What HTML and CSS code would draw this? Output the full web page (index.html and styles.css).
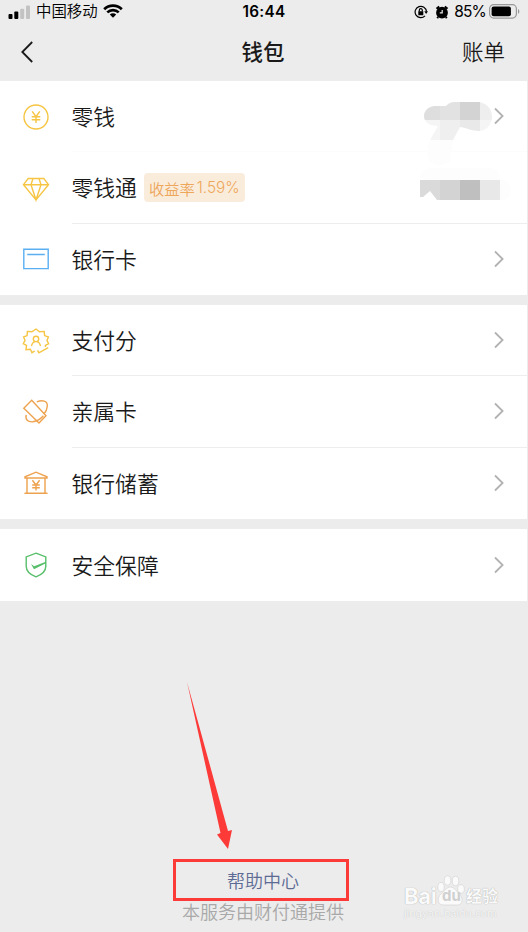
FILE: index.html
```html
<!DOCTYPE html>
<html lang="zh-CN">
<head>
  <meta charset="UTF-8" />
  <meta name="viewport" content="width=device-width, initial-scale=1.0"/>
  <title>钱包</title>
  <link rel="stylesheet" href="styles.css">
</head>
<body>
  <header>
    <div class="status">
      <div class="status-left">
        <svg class="signal" width="23" height="14" viewBox="0 0 23 14">
          <rect x="0.5" y="9" width="4" height="5" rx="1"/>
          <rect x="6.3" y="6.6" width="4" height="7.4" rx="1"/>
          <rect class="off" x="12.2" y="3.7" width="4" height="10.3" rx="1"/>
          <rect class="off" x="18" y="0.5" width="4" height="13.5" rx="1"/>
        </svg>
        <span class="carrier">中国移动</span>
        <svg class="wifi" width="20" height="14" viewBox="0 0 20 14">
          <path d="M1.2 5.3a12.4 12.4 0 0 1 17.6 0M4.3 8.4a8.1 8.1 0 0 1 11.4 0"/>
          <path class="dot" d="M10 13.8l-3.2-3.3a4.6 4.6 0 0 1 6.4 0z"/>
        </svg>
      </div>
      <span class="time">16:44</span>
      <div class="status-right">
        <svg class="lock" width="14" height="14" viewBox="0 0 14 14">
          <path d="M11 10.9A5.7 5.7 0 1 1 12.5 6.5"/>
          <path class="fill" d="M10.3 6.2h3.7l-1.9 2.7zM4.3 6.3h5v3.9h-5z"/>
          <path class="shackle" d="M5.3 6.5V5.2a1.5 1.5 0 0 1 3 0v1.3"/>
        </svg>
        <svg class="alarm" width="14" height="14" viewBox="0 0 14 14">
          <circle cx="7" cy="7.7" r="5.9"/>
          <path class="ears" d="M1.5 3.8l2.7-2.4M12.5 3.8L9.8 1.4M3.2 12l-1 1.2M10.8 12l1 1.2"/>
          <path class="hands" d="M7.2 4.9v3H4.8"/>
        </svg>
        <span class="percent">85%</span>
        <svg class="battery" width="31" height="15" viewBox="0 0 31 15">
          <rect class="shell" x="0.6" y="0.7" width="26.8" height="13.4" rx="4"/>
          <rect x="2.6" y="2.6" width="19.3" height="9.6" rx="2"/>
          <path class="cap" d="M29 5c1.8.7 1.8 4.1 0 4.8z"/>
        </svg>
      </div>
    </div>
    <nav>
      <svg class="back" width="12" height="22" viewBox="0 0 12 22"><path d="M11.2 1L1.3 11l9.9 10"/></svg>
      <h1>钱包</h1>
      <a class="bill">账单</a>
    </nav>
  </header>

  <section class="group">
    <div class="row">
      <svg class="icon yellow" viewBox="0 0 28 28">
        <circle cx="14" cy="14" r="12"/>
        <path d="M10.2 8.3l3.8 5.4 3.8-5.4M14 13.7v6.2M9.7 13.7h8.6M9.700 16.700h8.600"/>
      </svg>
      <div class="body faint">
        <span class="label">零钱</span>
        <svg class="chevron" viewBox="0 0 10 18"><path d="M1 1.5L8.6 9 1 16.5"/></svg>
      </div>
    </div>
    <div class="row">
      <svg class="icon yellow" viewBox="0 0 28 28">
        <path d="M6.2 4.5h15.6l4.7 6.2L14 26 1.5 10.7zM1.5 10.7h25M11 4.5l-2 6.2L14 26l5-15.3-2-6.2"/>
      </svg>
      <div class="body">
        <span class="label">零钱通</span>
        <span class="tag">收益率<b>1.59%</b></span>
      </div>
    </div>
    <div class="row">
      <svg class="icon blue" viewBox="0 0 28 28">
        <path d="M1.8 4.3h24.4v19.3H1.8zM5.2 9.5h17.6"/>
      </svg>
      <div class="body">
        <span class="label">银行卡</span>
        <svg class="chevron" viewBox="0 0 10 18"><path d="M1 1.5L8.6 9 1 16.5"/></svg>
      </div>
    </div>
    <!-- mosaic over the balances -->
    <svg class="mosaic" width="96" height="105" viewBox="0 0 96 105">
      <clipPath id="blob"><path d="M4 16c0-5 4-9 10-10h12c3-3 5-4 8-4h26c7 2 12 7 12 15s-6 14-13 14c-8 0-11-3-19-4L33 40 30 60c-4 7-19 7-22-2-2-6 0-12 2-18l8-14C9 26 4 22 4 16z"/></clipPath>
      <g clip-path="url(#blob)">
        <path fill="#dedede" d="M0 0h20v20H0z"/>
        <path fill="#e2e2e2" d="M20 0h20v20H20z"/>
        <path fill="#d3d3d3" d="M40 0h20v20H40z"/>
        <path fill="#eeeeee" d="M60 0h20v20H60z"/>
        <path fill="#f5f5f5" d="M0 20h20v20H0zM60 20h20v20H60z"/>
        <path fill="#efefef" d="M20 20h20v20H20z"/>
        <path fill="#e9e9e9" d="M40 20h20v20H40z"/>
        <path fill="#fdfdfd" d="M0 40h80v40H0z"/>
      </g>
      <path fill="#fdfdfd" d="M0 78c0-6 6-10 12-10h58c6 0 10 4 10 10v2h4c9 3 9 18 0 20h-4z"/>
      <path fill="#dadada" d="M0 80h20v20h-3l-7-9-7 6H0z"/>
      <path fill="#d3d3d3" d="M20 80h20v20H20z"/>
      <path fill="#bfbfbf" d="M40 80h20v20H40z"/>
      <path fill="#e8e8e8" d="M60 80h20v20H60z"/>
    </svg>
  </section>

  <section class="group">
    <div class="row">
      <svg class="icon yellow" viewBox="0 0 28 28">
        <path d="M12.8 24L10 25.7l-1.600-3.400-4.400.5.500-4.300-3.200-1.800L3 13.500 1.600 10l3.500-1.400.3-4.200 4.500.4L14 2l3.500 2.800 4.700-.4.400 4.200L26.400 10 25 13.500l1.600 3.200-3.200 1.800.1 1.500M15.600 23.400l1.300 2.500 9.300-5.200"/>
        <circle cx="14" cy="11.9" r="2.700"/>
        <path d="M9.500 19.200c.4-2.600 1.700-4.200 3.500-4.600M18.500 19.200c-.4-2.600-1.700-4.200-3.500-4.600"/>
      </svg>
      <div class="body">
        <span class="label">支付分</span>
        <svg class="chevron" viewBox="0 0 10 18"><path d="M1 1.5L8.6 9 1 16.5"/></svg>
      </div>
    </div>
    <div class="row">
      <svg class="icon orange" viewBox="0 0 28 28">
        <path d="M9.700 2.200L24 17.800l-7 7.300L1.800 10.200z"/>
        <path d="M14.800 3.900c5-2 11-1.600 10.500 4.400-.2 3.400-1.500 5.600-3.400 7.700M4.100 16.800c-.9 5.700 2.200 7.400 6.800 7 4.500-.6 7.500-2.500 10.500-6"/>
      </svg>
      <div class="body">
        <span class="label">亲属卡</span>
        <svg class="chevron" viewBox="0 0 10 18"><path d="M1 1.5L8.6 9 1 16.5"/></svg>
      </div>
    </div>
    <div class="row">
      <svg class="icon orange" viewBox="0 0 28 28">
        <path d="M3 9V7.800l11-4.600 11 4.600V9zM5 9v15M23 9v15M2.500 24.300h23M10.400 11.300l3.600 4.700 3.600-4.700M14 16v5.600M10.200 16h7.600M10.200 18.800h7.600"/>
      </svg>
      <div class="body">
        <span class="label">银行储蓄</span>
        <svg class="chevron" viewBox="0 0 10 18"><path d="M1 1.5L8.6 9 1 16.5"/></svg>
      </div>
    </div>
  </section>

  <section class="group single">
    <div class="row">
      <svg class="icon green" viewBox="0 0 28 28">
        <path d="M14 2.200l9.800 3.700v9.300c0 4.500-4.200 8.500-9.800 10.600-5.600-2.100-9.800-6.100-9.800-10.600V5.900z"/>
        <path class="solid" d="M9 13l3.200 2.300 11.600-4.500v1.500L12 18.200z"/>
      </svg>
      <div class="body">
        <span class="label">安全保障</span>
        <svg class="chevron" viewBox="0 0 10 18"><path d="M1 1.5L8.6 9 1 16.5"/></svg>
      </div>
    </div>
  </section>

  <footer>
    <svg class="arrow" width="46" height="168" viewBox="0 0 46 168"><path d="M0 0L41 149l4-1L41 167 30 152.500l3.500-1.500z"/></svg>
    <a class="help">帮助中心</a>
    <p>本服务由财付通提供</p>
  </footer>

  <div class="watermark">
    <div class="brand">
      <span class="bai">Bai</span>
      <span class="paw">
        <svg width="28" height="31" viewBox="0 0 28 31">
          <ellipse cx="4" cy="12" rx="3.2" ry="4.5"/>
          <ellipse cx="10.5" cy="5.5" rx="3.3" ry="4.7"/>
          <ellipse cx="18.5" cy="6" rx="3.3" ry="4.7"/>
          <ellipse cx="24" cy="14" rx="3.4" ry="4.3"/>
          <path d="M13.5 12c4 0 5.500 4 9 7s4 11-2 11H6c-6 0-6-8-2-11s5.500-7 9.500-7z"/>
        </svg>
        <i>du</i>
      </span>
      <span class="cn">经验</span>
    </div>
    <div class="url">jingyan.baidu.com</div>
  </div>
</body>
</html>
```
FILE: styles.css
```css
* {
  box-sizing: border-box;
}
body {
  position: relative;
  display: flex;
  flex-direction: column;
  height: 932px;
  margin: 0;
  padding-right: 1px;
  overflow: hidden;
  background: #ececec;
  color: #1a1a1a;
  font-family: "Inter", "Noto Sans CJK SC", sans-serif;
  font-weight: 350;
}
svg {
  display: block;
  flex: none;
}
header {
  height: 81px;
}
.status {
  display: grid;
  grid-template-columns: 1fr auto 1fr;
  align-items: center;
  height: 23px;
  padding: 0 7px 0 8px;
  color: #000;
}
.status-left,
.status-right {
  display: flex;
  align-items: center;
}
.status-right {
  justify-content: flex-end;
}
.signal {
  margin-right: 5px;
}
.signal .off {
  fill: #c2c2c2;
}
.carrier {
  padding-top: 1px;
  font-size: 15.4px;
  line-height: 22px;
}
.wifi {
  margin: -2px 0 0 5px;
  fill: none;
  stroke: #000;
  stroke-width: 2.7;
}
.wifi .dot {
  fill: #000;
  stroke: none;
}
.time {
  font-size: 15.3px;
  font-weight: 600;
  letter-spacing: 0.3px;
}
.lock {
  margin-right: 7px;
  fill: none;
  stroke: #000;
  stroke-width: 1.2;
}
.lock .fill {
  fill: #000;
  stroke: none;
}
.alarm {
  margin-right: 5px;
}
.alarm .ears {
  stroke: #000;
  stroke-width: 2;
}
.alarm .hands {
  fill: none;
  stroke: #ececec;
  stroke-width: 1.2;
}
.percent {
  margin-right: 3px;
  font-size: 15.5px;
  font-weight: 400;
  letter-spacing: -0.8px;
}
.battery {
  margin-top: -1px;
}
.battery .shell {
  fill: none;
  stroke: #999;
  stroke-width: 1.2;
}
.battery .cap {
  fill: #999;
}
nav {
  display: grid;
  grid-template-columns: 1fr auto 1fr;
  align-items: center;
  height: 58px;
  padding: 0 22px 0 21px;
}
.back {
  margin-top: -1px;
  fill: none;
  stroke: #1a1a1a;
  stroke-width: 1.8;
}
h1 {
  margin: 0;
  font-size: 21.5px;
  font-weight: 500;
  line-height: 30px;
}
.bill {
  justify-self: end;
  font-size: 21.5px;
  line-height: 30px;
}
.group {
  position: relative;
  display: flex;
  flex-direction: column;
  height: 214px;
  margin-bottom: 10px;
  background: #fff;
}
.group.single {
  height: 72px;
  margin-bottom: 0;
}
.row {
  display: flex;
  flex: 1;
  align-items: center;
  padding-left: 21.5px;
}
.icon {
  width: 28px;
  height: 28px;
  margin-right: 22px;
  fill: none;
  stroke: currentColor;
  stroke-width: 1.4;
}
.yellow {
  color: #f5c543;
}
.blue {
  color: #5aaff3;
}
.orange {
  color: #eea24f;
}
.green {
  color: #57be6a;
}
.icon .solid {
  fill: currentColor;
  stroke: none;
}
.body {
  display: flex;
  flex: 1;
  align-items: center;
  align-self: stretch;
  padding: 1px 23px 0 0;
  border-bottom: 1px solid #ededed;
}
.body.faint {
  border-color: #fcfcfc;
}
.row:last-of-type .body {
  border-bottom: none;
}
.label {
  padding-top: 1px;
  font-size: 21.8px;
  line-height: 32px;
}
.tag {
  display: flex;
  align-items: center;
  height: 29px;
  margin-left: 7px;
  padding: 0 5px;
  border-radius: 4px;
  background: #faecdb;
  color: #eda65a;
  font-size: 15.3px;
}
.tag b {
  margin-left: 2px;
  font-weight: 350;
}
.chevron {
  width: 10px;
  height: 18px;
  margin: -1px 0 0 auto;
  fill: none;
  stroke: #b2b2b2;
  stroke-width: 1.8;
}
.mosaic {
  position: absolute;
  top: 19px;
  left: 420px;
}
footer {
  display: flex;
  flex-direction: column;
  align-items: center;
  margin-top: auto;
  padding-bottom: 7px;
  font-size: 18px;
}
.arrow {
  align-self: flex-start;
  margin: 0 0 9px 187px;
  fill: #fc3a38;
}
.help {
  width: 176px;
  height: 42px;
  margin-right: 5px;
  padding-left: 4px;
  border: 3px solid #fc3a38;
  color: #5d6b94;
  line-height: 39px;
  text-align: center;
}
footer p {
  margin: 0 1px 0 0;
  color: #a8a8a8;
  line-height: 24px;
}
.watermark {
  position: absolute;
  top: 874px;
  left: 404px;
  color: #fafafa;
  text-shadow: 0 0 1px #999;
}
.brand {
  display: flex;
  align-items: flex-end;
  height: 32px;
  font-size: 22px;
  font-weight: 700;
  line-height: 20px;
}
.bai {
  width: 33px;
  letter-spacing: -0.3px;
}
.paw {
  position: relative;
}
.paw svg {
  fill: #fafafa;
  stroke: #d8d8d8;
  stroke-width: 0.8;
}
.paw i {
  position: absolute;
  bottom: 2px;
  left: 5px;
  color: #d0d0d0;
  font-size: 15px;
  font-style: normal;
  line-height: 16px;
  text-shadow: none;
}
.cn {
  margin-left: 1px;
  font-size: 16px;
}
.url {
  color: #f6f6f6;
  font-family: "Liberation Sans", sans-serif;
  font-size: 11.5px;
  font-weight: 400;
  line-height: 15px;
  text-shadow: 0 0 1px #bbb;
}
```
